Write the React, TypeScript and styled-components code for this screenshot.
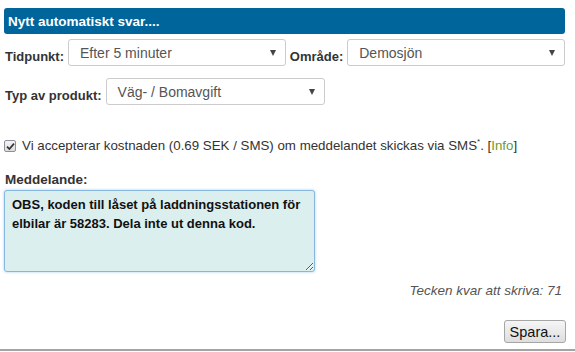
import { FC } from 'react';
import styled, { createGlobalStyle } from 'styled-components';

const GlobalStyle = createGlobalStyle`
  html, body {
    margin: 0;
    background: #fff;
  }
  body {
    font-family: 'Liberation Sans', Arial, sans-serif;
    color: #333;
  }
`;

type Option = { label: string; width?: number };

const Select: FC<Option> = ({ label, width }) => (
  <SelectBox $width={width}>
    <span>{label}</span>
    <Arrow />
  </SelectBox>
);

const App: FC = () => (
  <>
    <GlobalStyle />
    <Page>
      <Header>Nytt automatiskt svar....</Header>

      <Row>
        <Label>Tidpunkt:</Label>
        <Select label="Efter 5 minuter" />
        <Label>Område:</Label>
        <Select label="Demosjön" />
      </Row>

      <Row $top={12}>
        <Label>Typ av produkt:</Label>
        <Select label="Väg- / Bomavgift" width={219} />
      </Row>

      <Accept>
        <Check>
          <svg width="9" height="9" viewBox="0 0 9 9">
            <path d="M1 4.6 L3.4 7 L8 1.6" fill="none" stroke="#333" strokeWidth="1.7" />
          </svg>
        </Check>
        <span>
          Vi accepterar kostnaden (0.69 SEK / SMS) om meddelandet skickas via SMS<sup>*</sup>. [<Info>Info</Info>]
        </span>
      </Accept>

      <FieldLabel>Meddelande:</FieldLabel>
      <Message
        defaultValue="OBS, koden till låset på laddningsstationen för elbilar är 58283. Dela inte ut denna kod."
      />

      <Counter>Tecken kvar att skriva: 71</Counter>

      <Actions>
        <Button>Spara...</Button>
      </Actions>
    </Page>
  </>
);

export default App;

const Page = styled.div`
  box-sizing: border-box;
  width: 575px;
  height: 351px;
  padding: 8px 10px 0 4px;
  border-bottom: 2px solid #a4a4a4;
  display: flex;
  flex-direction: column;
`;

const Header = styled.div`
  height: 26px;
  line-height: 27px;
  padding-left: 4px;
  background: #00659a;
  border-radius: 3px;
  color: #fff;
  font-weight: bold;
  font-size: 13.5px;
`;

const Row = styled.div<{ $top?: number }>`
  display: flex;
  align-items: flex-end;
  gap: 4px;
  margin-top: ${(p) => p.$top ?? 5}px;
  padding-left: 1px;
`;

const Label = styled.label`
  font-weight: bold;
  font-size: 13px;
  line-height: 16px;
  padding-bottom: 1px;
  color: #333;
  white-space: nowrap;
`;

const SelectBox = styled.div<{ $width?: number }>`
  box-sizing: border-box;
  flex: ${(p) => (p.$width ? `0 0 ${p.$width}px` : '1')};
  height: 27px;
  display: flex;
  align-items: center;
  justify-content: space-between;
  padding: 0 9px 0 11px;
  border: 1px solid #ccc;
  border-radius: 3px;
  background: #fff;
  font-size: 14px;
  color: #555;
`;

const Arrow = styled.span`
  width: 0;
  height: 0;
  border-left: 3.5px solid transparent;
  border-right: 3.5px solid transparent;
  border-top: 6px solid #444;
`;

const Accept = styled.div`
  display: flex;
  align-items: center;
  gap: 6px;
  margin-top: 32px;
  font-size: 13.3px;
  color: #333;

  sup {
    font-size: 8px;
    vertical-align: 6px;
  }
`;

const Check = styled.span`
  box-sizing: border-box;
  width: 12px;
  height: 12px;
  margin-top: 2px;
  border: 1px solid #8f8f9d;
  border-radius: 2px;
  background: linear-gradient(#f4f4f4, #dcdcdc);
  display: flex;
  align-items: center;
  justify-content: center;
`;

const Info = styled.span`
  color: #6f9a2a;
`;

const FieldLabel = styled.div`
  margin-top: 19px;
  padding-left: 1px;
  font-weight: bold;
  font-size: 13.5px;
  color: #333;
`;

const Message = styled.textarea`
  box-sizing: border-box;
  width: 311px;
  height: 82px;
  margin: 3px 0 0;
  padding: 4px 6px 4px 7px;
  border: 1px solid #86b7df;
  border-radius: 3px;
  background: #dcefef;
  box-shadow: 0 0 3px rgba(102, 175, 233, 0.6);
  font-family: 'Liberation Sans', Arial, sans-serif;
  font-weight: bold;
  font-size: 13px;
  line-height: 19px;
  color: #111;
  outline: none;
`;

const Counter = styled.div`
  margin-top: 11px;
  text-align: right;
  padding-right: 3px;
  font-style: italic;
  font-size: 13.5px;
  color: #555;
`;

const Actions = styled.div`
  display: flex;
  justify-content: flex-end;
  margin-top: 22px;
`;

const Button = styled.button`
  height: 23px;
  width: 62px;
  margin-right: -1px;
  padding: 0;
  border: 1px solid #a6a6a6;
  border-radius: 3px;
  background: linear-gradient(#f6f6f6, #dedede);
  font-family: 'Liberation Sans', Arial, sans-serif;
  font-size: 14.5px;
  color: #111;
`;
